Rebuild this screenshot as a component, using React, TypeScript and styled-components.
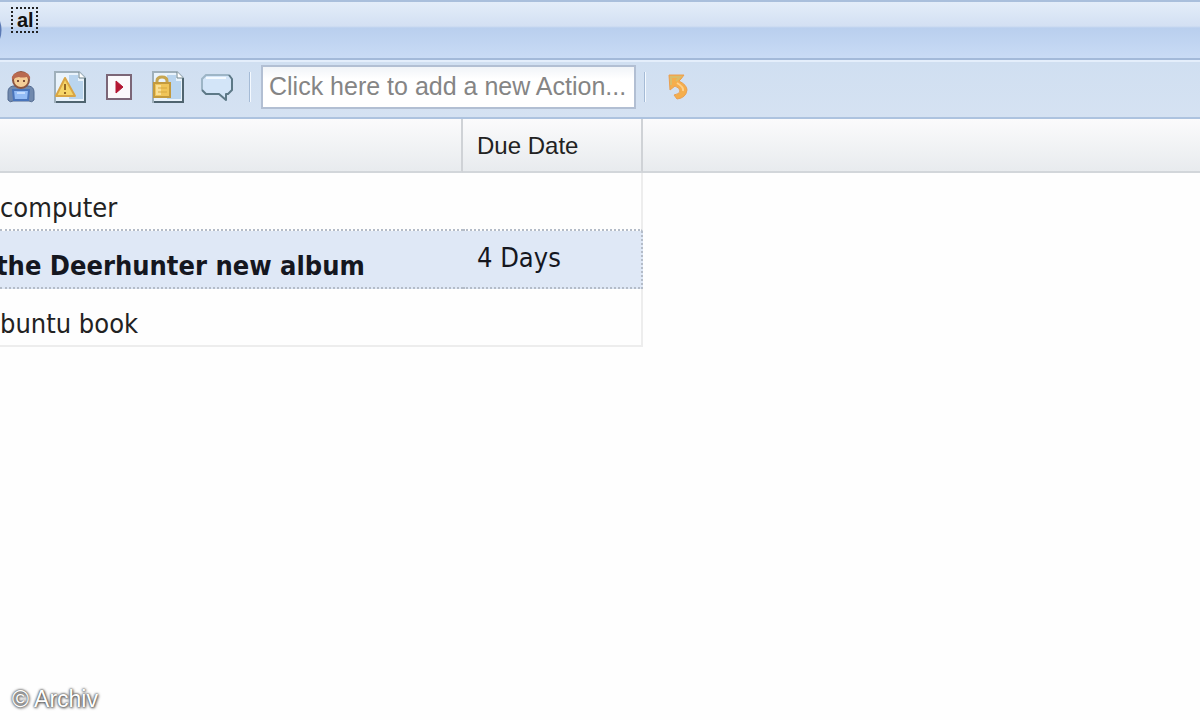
import React from "react";
import styled, { createGlobalStyle, css } from "styled-components";

const GlobalStyle = createGlobalStyle`
  *, *::before, *::after { box-sizing: border-box; }
  body { margin: 0; background: #fefefe; color: #222; overflow-x: hidden; }
`;

const Page = styled.div`
  display: flex;
  flex-direction: column;
  min-height: 100vh;
  font-family: "DejaVu Sans Condensed", "Noto Sans", sans-serif;
  font-size: 27px;
  line-height: 32px;
`;

const TitleBar = styled.header`
  display: flex;
  align-items: flex-start;
  gap: 9px;
  height: 60px;
  padding-top: 5px;
  border-top: 2px solid #a9bfdc;
  border-bottom: 2px solid #a3b9d9;
  background: linear-gradient(#e3edf9 0, #d3e0f3 24px, #b9cfee 26px, #c9dbf5 100%);
`;

const TitleEdge = styled.svg`
  display: block;
  flex: none;
  margin-top: 14px;
`;

const Title = styled.h1`
  margin: 0;
  padding: 0 2px 0 4px;
  border: 2px dotted #222;
  color: #111;
  font: bold 20px/22px "Liberation Sans", Arial, sans-serif;
`;

const Toolbar = styled.div`
  display: flex;
  align-items: center;
  height: 59px;
  padding: 0 4px 6px;
  border-top: 2px solid #e4eefb;
  border-bottom: 2px solid #adc3df;
  background: linear-gradient(#d0dff1, #d5e2f2);
`;

const IconButton = styled.button`
  display: flex;
  flex: none;
  align-items: center;
  justify-content: center;
  width: 34px;
  height: 34px;
  margin-right: 15px;
  padding: 0;
  border: 0;
  background: none;
`;

const Separator = styled.span`
  flex: none;
  width: 2px;
  height: 30px;
  border-left: 1px solid #a5bbd6;
  border-right: 1px solid #f4f9ff;
`;

const ActionInput = styled.input`
  width: 375px;
  min-width: 0;
  height: 44px;
  margin: 0 8px 0 10px;
  padding: 0 6px;
  border: 2px solid #b2bfd3;
  background: linear-gradient(#f1f4f8, #ffffff 12px);
  font: 25px/28px "Liberation Sans", Arial, sans-serif;
  &::placeholder { color: #858585; opacity: 1; }
`;

const UndoGroup = styled.div`
  display: flex;
  padding-left: 15px;
`;

const Grid = styled.table`
  width: 100%;
  table-layout: fixed;
  border-collapse: separate;
  border-spacing: 0;
`;

const Heading = styled.th<{ $last?: boolean }>`
  height: 54px;
  padding: 2px 14px 0;
  border-bottom: 2px solid #d2d6da;
  background: linear-gradient(#fbfbfc, #e8ebee);
  color: #222;
  font: 24px/28px "Liberation Sans", Arial, sans-serif;
  text-align: left;
  ${(p) => !p.$last && css`border-right: 2px solid #cfd2d6;`}
`;

const Cell = styled.td<{ $end?: boolean }>`
  height: 58px;
  padding: 14px 14px 0 0;
  border-bottom: 2px solid #ededed;
  white-space: nowrap;
  ${(p) => p.$end && css`
    padding: 0 14px 2px;
    border-right: 2px solid #ededed;
  `}
`;

const Row = styled.tr<{ $selected?: boolean }>`
  ${(p) => p.$selected && css`
    ${Cell} {
      border-color: #b4bcc8;
      border-bottom-style: dotted;
      background: #dfe8f6;
      color: #15171f;
    }
    ${Cell}:first-child { font-weight: bold; text-indent: -4px; }
    ${Cell}:last-child { border-right-style: dotted; }
  `}
  ${(p) => !p.$selected && css`
    &:first-child ${Cell} { border-bottom: 2px dotted #b4bcc8; }
    &:first-child ${Cell}, &:last-child ${Cell} { background: #fefefe; }
  `}
`;

const Credit = styled.footer`
  margin-top: auto;
  padding: 0 12px 7px;
  color: #fff;
  font: 23px/28px "Liberation Sans", Arial, sans-serif;
  text-shadow: 0 0 2px #444, 0 0 3px #555, 1px 1px 3px #777;
`;

const UserIcon = () => (
  <svg width="30" height="34" viewBox="0 0 30 34" aria-hidden="true">
    <path d="M2 30V22q0-5 5-6h16q5 1 5 6v8q-2 3-5 1H7q-3 2-5-1z" fill="#7189ad" stroke="#536b91" />
    <circle cx="15" cy="10" r="8" fill="#f5cd96" stroke="#8b5440" strokeWidth="2" />
    <path d="M6 10q-1-8 9-8t9 8l-3-3q-6 1-8 0-3 0-7 3z" fill="#b96a50" />
    <path d="M11 11h2m4 0h2" stroke="#7b4b36" strokeWidth="2" />
    <path d="M7 20h16l-1 10H8z" fill="#94bdf6" stroke="#4975bb" strokeWidth="2" />
    <path d="M11 23h8" stroke="#c4ddff" strokeWidth="2" />
  </svg>
);

const Note = () => (
  <>
    <path d="M2 2h24l6 6v24H2z" fill="#e9f3fb" stroke="#9fb0bb" strokeWidth="2" />
    <path d="M16 5h9v6h5v18H16z" fill="#bad5ee" />
    <path d="M32 8v24H3" fill="none" stroke="#4f646f" strokeWidth="2" />
    <path d="M26 2v6h6" fill="#fff" stroke="#6f858e" />
  </>
);

const WarningNoteIcon = () => (
  <svg width="34" height="34" viewBox="0 0 34 34" aria-hidden="true">
    <Note />
    <path d="M12 8L22 26H3z" fill="#f6d568" stroke="#d9a544" strokeWidth="2" strokeLinejoin="round" />
    <path d="M12 14v6m0 2v2" stroke="#936825" strokeWidth="2" />
  </svg>
);

const PlayIcon = () => (
  <svg width="26" height="26" viewBox="0 0 26 26" aria-hidden="true">
    <path d="M1 1h24v24H1z" fill="#fbf9fb" stroke="#7b6677" strokeWidth="2" />
    <path d="M10 7l7 6-7 6z" fill="#b31632" stroke="#b31632" />
  </svg>
);

const LockedNoteIcon = () => (
  <svg width="34" height="34" viewBox="0 0 34 34" aria-hidden="true">
    <Note />
    <path d="M6 14v-3q0-4 5-4t5 4v3" fill="none" stroke="#c7a650" strokeWidth="3" />
    <path d="M3 13h16v14H3z" fill="#f0c559" stroke="#c39a3e" strokeWidth="2" />
    <path d="M5 15h5v10H5z" fill="#fae096" />
    <path d="M7 18h9m-9 4h9" stroke="#d7a841" />
  </svg>
);

const SpeechIcon = () => (
  <svg width="34" height="32" viewBox="0 0 34 32" aria-hidden="true">
    <path d="M6 4h23l3 4v11l-4 4h-2v6l-7-6H6l-4-4V8z" fill="#d3e5f8" />
    <path d="M2 19V8l4-4h23" fill="none" stroke="#9db5c6" strokeWidth="2" />
    <path d="M29 4l3 4v11l-4 4h-2v6l-7-6H6l-4-4" fill="none" stroke="#5d7987" strokeWidth="2" strokeLinejoin="round" />
    <path d="M6 7h20" stroke="#f4faff" strokeWidth="2" />
  </svg>
);

const UndoIcon = () => (
  <svg width="24" height="28" viewBox="0 0 24 28" aria-hidden="true">
    <path d="M3 2h15l-3 4 -2 2q8 4 8 9-1 8-10 9l-3-4q6-1 6-4 0-3-5-5l-5 4z" fill="#f5ae4c" stroke="#e9a052" />
    <path d="M5 12V4h9l-4 4" fill="none" stroke="#d9bd6a" strokeWidth="2" />
    <path d="M11 10q7 4 6 8" fill="none" stroke="#ffd08a" strokeWidth="2" />
  </svg>
);

const tools = [
  { label: "User", icon: <UserIcon /> },
  { label: "Warning note", icon: <WarningNoteIcon /> },
  { label: "Start", icon: <PlayIcon /> },
  { label: "Locked note", icon: <LockedNoteIcon /> },
  { label: "Comment", icon: <SpeechIcon /> },
];

const actions = [
  { name: "computer", due: "" },
  { name: "the Deerhunter new album", due: "4 Days", selected: true },
  { name: "buntu book", due: "" },
];

export default function App() {
  return (
    <Page>
      <GlobalStyle />
      <TitleBar>
        <TitleEdge width="2" height="18" viewBox="0 0 2 18" aria-hidden="true">
          <path d="M0 0q3 9 0 18z" fill="#5b79b4" />
        </TitleEdge>
        <Title>al</Title>
      </TitleBar>
      <Toolbar role="toolbar" aria-label="Actions">
        {tools.map((t) => (
          <IconButton key={t.label} type="button" aria-label={t.label}>{t.icon}</IconButton>
        ))}
        <Separator />
        <ActionInput type="text" aria-label="New action" placeholder="Click here to add a new Action..." />
        <Separator />
        <UndoGroup>
          <IconButton type="button" aria-label="Undo"><UndoIcon /></IconButton>
        </UndoGroup>
      </Toolbar>
      <Grid>
        <colgroup>
          <col width="463" />
          <col width="180" />
          <col />
        </colgroup>
        <thead>
          <tr>
            <Heading aria-label="Action" />
            <Heading>Due Date</Heading>
            <Heading $last aria-hidden="true" />
          </tr>
        </thead>
        <tbody>
          {actions.map((a) => (
            <Row key={a.name} $selected={a.selected}>
              <Cell>{a.name}</Cell>
              <Cell $end>{a.due}</Cell>
            </Row>
          ))}
        </tbody>
      </Grid>
      <Credit>© Archiv</Credit>
    </Page>
  );
}
